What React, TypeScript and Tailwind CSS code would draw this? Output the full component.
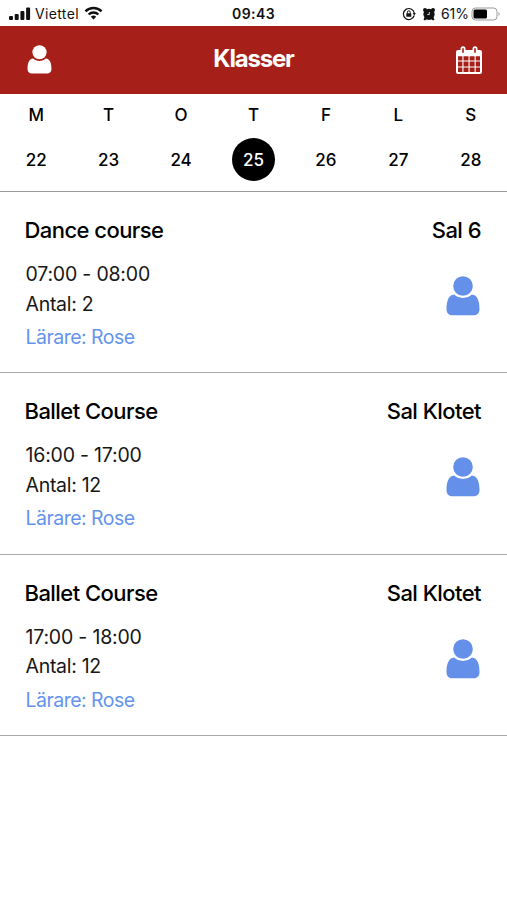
import React from "react";

interface Course {
  title: string;
  room: string;
  time: string;
  count: number;
  teacher: string;
}

const days = [
  { label: "M", date: 22 },
  { label: "T", date: 23 },
  { label: "O", date: 24 },
  { label: "T", date: 25 },
  { label: "F", date: 26 },
  { label: "L", date: 27 },
  { label: "S", date: 28 },
];

const selectedDate = 25;

const courses: Course[] = [
  { title: "Dance course", room: "Sal 6", time: "07:00 - 08:00", count: 2, teacher: "Rose" },
  { title: "Ballet Course", room: "Sal Klotet", time: "16:00 - 17:00", count: 12, teacher: "Rose" },
  { title: "Ballet Course", room: "Sal Klotet", time: "17:00 - 18:00", count: 12, teacher: "Rose" },
];

const UserIcon: React.FC<{ className?: string }> = ({ className }) => (
  <svg viewBox="0 0 34 40" fill="currentColor" className={className} aria-hidden="true">
    <circle cx="17" cy="10" r="9.8" />
    <path d="M8.2 18.6C2.4 19 .5 25.5.5 33c0 4 2.300 6.300 6 6.300h21c3.700 0 6-2.300 6-6.300 0-7.500-1.900-14-7.700-14.400-2.300 2.100-5.300 3.300-8.800 3.300s-6.500-1.200-8.800-3.300z" />
  </svg>
);

const CalendarIcon: React.FC<{ className?: string }> = ({ className }) => (
  <svg viewBox="0 0 26 28" className={className} aria-hidden="true">
    <path
      fill="currentColor"
      fillRule="evenodd"
      d="M2 4h22a2 2 0 0 1 2 2v20a2 2 0 0 1-2 2H2a2 2 0 0 1-2-2V6a2 2 0 0 1 2-2zM2 10.200v4.300h4.400v-4.300zM7.500 10.200v4.300h5v-4.300zM13.600 10.200v4.300h5v-4.300zM19.700 10.200v4.300H24v-4.300zM2 15.600v4.800h4.400v-4.800zM7.500 15.600v4.800h5v-4.800zM13.600 15.600v4.800h5v-4.800zM19.700 15.600v4.800H24v-4.800zM2 21.500V26h4.400v-4.500zM7.500 21.500V26h5v-4.500zM13.600 21.500V26h5v-4.500zM19.700 21.500V26H24v-4.500z"
    />
    <rect x="4.500" y=".2" width="5" height="8.300" rx="2.500" fill="currentColor" />
    <rect x="16.500" y=".2" width="5" height="8.300" rx="2.500" fill="currentColor" />
    <rect x="6.200" y="2" width="1.600" height="5" rx=".8" fill="#a61f18" />
    <rect x="18.200" y="2" width="1.600" height="5" rx=".8" fill="#a61f18" />
  </svg>
);

const StatusBar = () => (
  <div className="grid h-[26px] grid-cols-[1fr_auto_1fr] items-center pt-0.5 pr-1.5 pl-[9px] text-sm text-[#111]">
    <div className="flex items-center">
      <svg viewBox="0 0 22 14" className="h-3.5 w-[22px]" fill="currentColor">
        <rect x="0" y="9" width="4" height="4" rx="1" />
        <rect x="5.700" y="7" width="4" height="6" rx="1" />
        <rect x="11.400" y="4" width="4" height="9" rx="1" />
        <rect x="17.100" y="0.500" width="4" height="12.500" rx="1" />
      </svg>
      <span className="ml-1 tracking-[0.025em]">Viettel</span>
      <svg viewBox="0 0 20 14" className="mb-0.5 ml-[5px] h-3.5 w-[19px]" fill="none" stroke="currentColor" strokeWidth="2.500">
        <path d="M1.500 5.200a12.200 12.200 0 0 1 17 0" />
        <path d="M4.900 8.600a7.300 7.300 0 0 1 10.200 0" />
        <path d="M10 13.800 7.200 11a4 4 0 0 1 5.600 0z" fill="currentColor" stroke="none" />
      </svg>
    </div>
    <span className="mr-[3px] font-semibold tracking-[0.03em]">09:43</span>
    <div className="flex items-center justify-end">
      <svg viewBox="0 0 14 14" className="size-3.5" fill="none" stroke="currentColor">
        <path d="M12.200 8.500A5.500 5.500 0 1 1 12.300 6" strokeWidth="1.200" />
        <path d="m10.600 6 3.200 0-1.500 2.400z" fill="currentColor" stroke="none" />
        <rect x="4.300" y="6.200" width="5" height="3.600" rx=".5" fill="currentColor" stroke="none" />
        <path d="M5.400 6.500V5.200a1.400 1.400 0 0 1 2.800 0v1.300" />
      </svg>
      <svg viewBox="0 0 14 14" className="ml-1.5 size-3.5">
        <g fill="currentColor">
          <circle cx="7" cy="7.300" r="5.600" />
          <circle cx="3" cy="3" r="2" />
          <circle cx="11" cy="3" r="2" />
          <path d="m3 9.500-1.500 3 1.400.9L5 12zM11 9.500l1.500 3-1.400.9L9 12z" />
        </g>
        <path d="M7.300 5v2.600H5.200" fill="none" stroke="white" strokeWidth=".8" />
      </svg>
      <span className="ml-[5px]">61%</span>
      <svg viewBox="0 0 30 14" className="ml-0.5 h-3.5 w-[30px]">
        <rect x="1" y="1" width="25" height="12" rx="3.500" fill="white" stroke="#999" />
        <rect x="2.500" y="2.500" width="13.500" height="9" rx="1.500" fill="black" />
        <path d="M27.500 5v4c1.500-.5 1.500-3.500 0-4z" fill="#999" />
      </svg>
    </div>
  </div>
);

const CourseRow: React.FC<{ course: Course }> = ({ course }) => (
  <article className="h-[181.4px] border-b border-[#aaa] pt-[22px] pr-[26px] pl-[24.5px]">
    <div className="flex justify-between text-[22px] leading-8 font-medium tracking-[-0.025em]">
      <h2>{course.title}</h2>
      <span>{course.room}</span>
    </div>
    <div className="mt-[14px] flex justify-between text-[19.5px] leading-[29.5px] text-[#171717]">
      <div className="pl-px">
        <p className="tracking-[-0.01em]">{course.time}</p>
        <p className="tracking-[-0.015em]">Antal: {course.count}</p>
        <p className="mt-1 tracking-[-0.027em] text-[#6594ee]">Lärare: {course.teacher}</p>
      </div>
      <UserIcon className="mt-4 mr-px h-10 w-[34px] text-[#6490ea]" />
    </div>
  </article>
);

export default function App() {
  return (
    <div className="min-h-[900px] w-full bg-white font-['Inter',sans-serif] text-black">
      <StatusBar />
      <header className="grid h-[68px] grid-cols-[1fr_auto_1fr] items-center bg-[#a61f18] px-[26px] text-white">
        <UserIcon className="mb-0.5 ml-px h-[29px] w-[25px]" />
        <h1 className="pb-0.5 text-2xl font-bold tracking-[-0.05em]">Klasser</h1>
        <CalendarIcon className="-mr-px h-7 w-[26px] justify-self-end" />
      </header>
      <div className="grid h-[98px] grid-cols-7 border-b border-[#999] text-center text-[17px] font-medium">
        {days.map((d) => (
          <div key={d.date} className="flex flex-col items-center pt-[9px]">
            <span className="leading-6">{d.label}</span>
            <span
              className={
                d.date === selectedDate
                  ? "mt-[11px] flex size-[43px] items-center justify-center rounded-full bg-black pt-0.5 text-white"
                  : "mt-[11px] flex size-[43px] items-center justify-center pt-0.5"
              }
            >
              {d.date}
            </span>
          </div>
        ))}
      </div>
      {courses.map((c) => (
        <CourseRow key={c.time} course={c} />
      ))}
    </div>
  );
}
